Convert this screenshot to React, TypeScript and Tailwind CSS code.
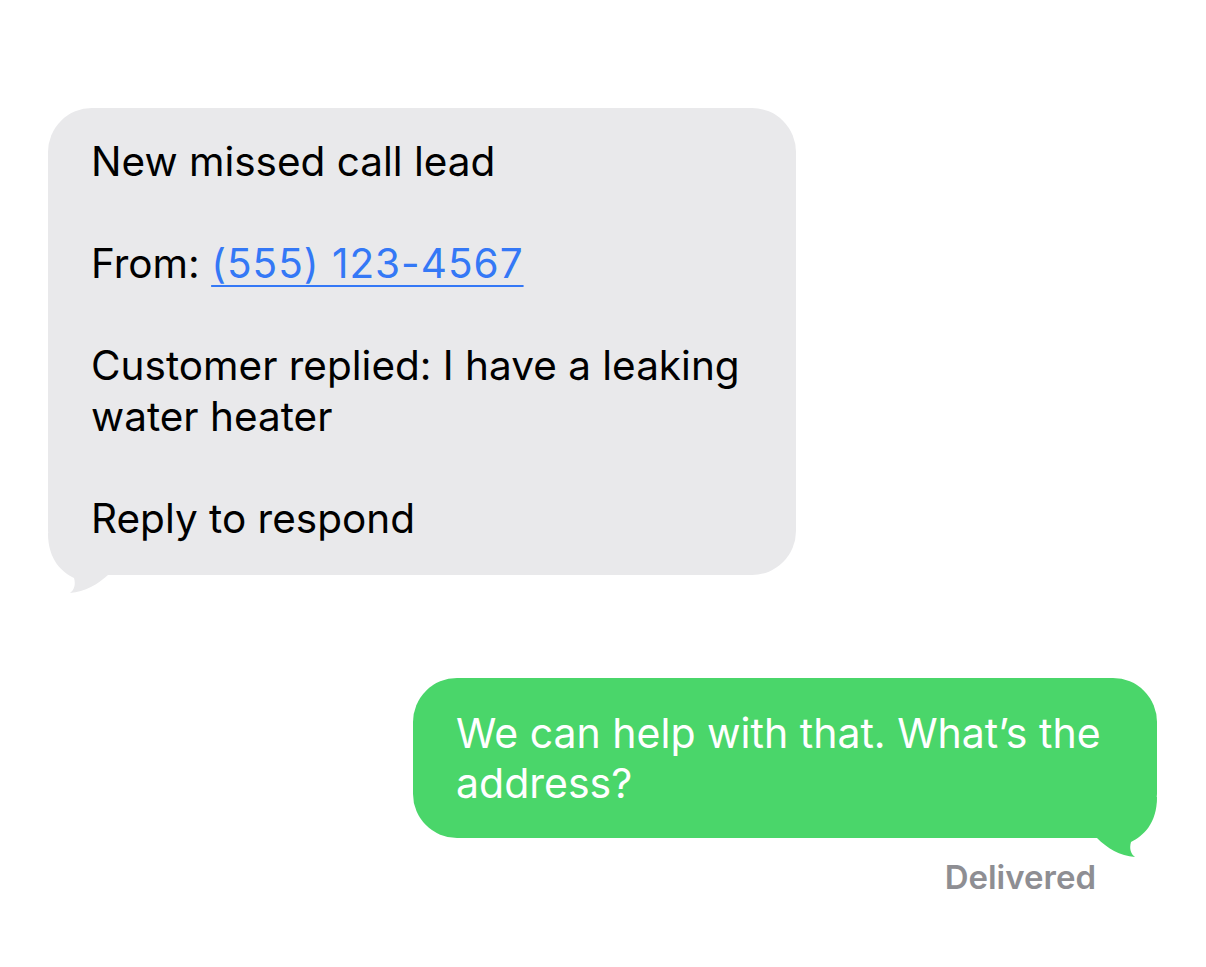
import React from "react";

export default function App() {
  return (
    <div className="min-h-[967px] w-[1206px] bg-white flex flex-col" style={{ fontFamily: "Inter, 'Liberation Sans', sans-serif" }}>
      <div className="relative ml-[48px] mt-[108px] w-[748px] rounded-[44px] bg-[#e9e9eb] px-[43px] pt-[28px] pb-[31px] text-[40.5px] leading-[51px] text-black">
        <p>New missed call lead</p>
        <p>&nbsp;</p>
        <p>
          From:{" "}
          <span className="text-[#3478f6] underline decoration-[2px] underline-offset-[7px] tracking-[1px]">(555) 123-4567</span>
        </p>
        <p>&nbsp;</p>
        <p>Customer replied: I have a leaking water heater</p>
        <p>&nbsp;</p>
        <p>Reply to respond</p>
        <svg className="absolute left-0 bottom-[-18px]" width="90" height="60" viewBox="0 0 90 60">
          <path d="M0 0 C0 27 14 39 26 45 C28 52 26 57 22 60 C37 59 50 51 60 42 L90 42 L90 0 Z" fill="#e9e9eb" />
        </svg>
      </div>
      <div className="mt-[103px] mr-[49px] self-end flex flex-col items-end">
        <div className="relative w-[744px] rounded-[44px] bg-[#4ad66a] px-[43px] pt-[30px] pb-[30px] text-[41px] leading-[50px] text-white">
          <p>We can help with that. What’s the address?</p>
          <svg className="absolute right-0 bottom-[-19px]" width="90" height="60" viewBox="0 0 90 60">
            <path d="M90 0 C90 27 76 39 64 45 C62 52 64 57 68 60 C53 59 40 51 30 41 L0 41 L0 0 Z" fill="#4ad66a" />
          </svg>
        </div>
        <div className="mt-[22px] mr-[61px] text-[33px] font-semibold leading-[34px] text-[#8e8e93]">Delivered</div>
      </div>
    </div>
  );
}
